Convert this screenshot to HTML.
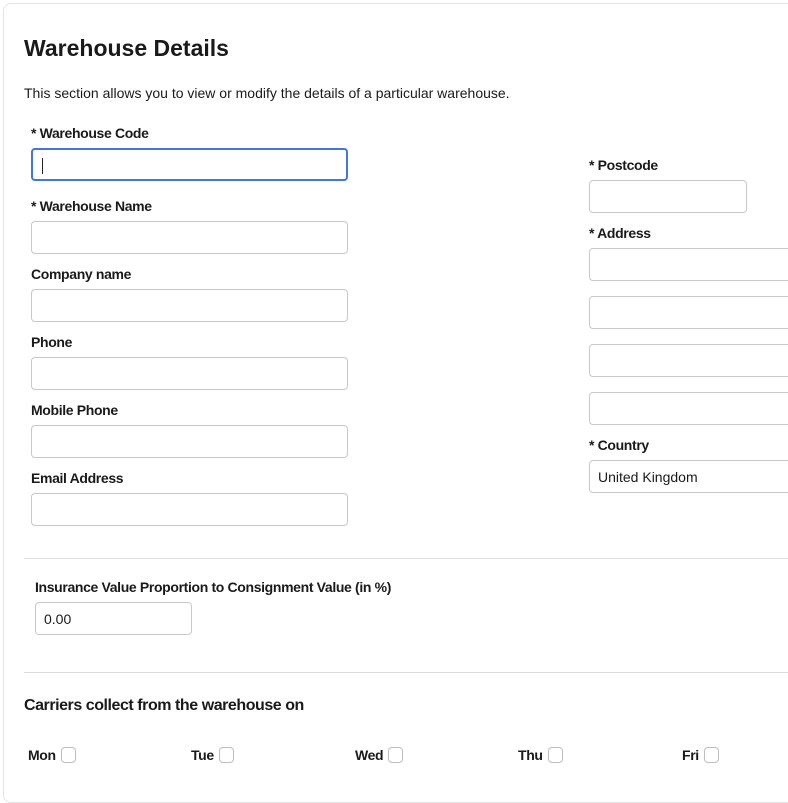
<!DOCTYPE html>
<html><head><style>
*{box-sizing:border-box;margin:0;padding:0}
body{width:788px;height:786px;background:#fff;font-family:"Liberation Sans",sans-serif;color:#1a1a1a;position:relative;overflow:hidden}
.card{position:absolute;left:3px;top:3px;width:800px;height:800px;border:1px solid #e4e4e4;border-radius:8px}
.a{position:absolute;white-space:nowrap}
.t{font-size:23px;font-weight:bold;left:24px;top:35px}
.d{font-size:14px;left:24px;top:85px}
.l{font-size:14px;font-weight:bold;letter-spacing:-0.35px}
.i{position:absolute;height:33px;border:1px solid #c8c8c8;border-radius:4px;background:#fff;font-size:14px;padding:8px 8px}
.hr{position:absolute;left:24px;width:770px;height:1px;background:#dcdcdc}
.cb{display:inline-block;width:15px;height:16px;border:1px solid #bdbdbd;border-radius:4px;vertical-align:middle;margin-left:5px;position:relative;top:-1px}
</style></head><body>
<div class="card"></div>
<div class="a t">Warehouse Details</div>
<div class="a d">This section allows you to view or modify the details of a particular warehouse.</div>

<div class="a l" style="left:31px;top:125px">* Warehouse Code</div>
<div class="i" style="left:31px;top:148px;width:317px;border:2px solid #3f76e0"><span style="display:inline-block;width:1px;height:16px;background:#222;margin-left:1px"></span></div>
<div class="a l" style="left:31px;top:198px">* Warehouse Name</div>
<div class="i" style="left:31px;top:221px;width:317px"></div>
<div class="a l" style="left:31px;top:266px">Company name</div>
<div class="i" style="left:31px;top:289px;width:317px"></div>
<div class="a l" style="left:31px;top:334px">Phone</div>
<div class="i" style="left:31px;top:357px;width:317px"></div>
<div class="a l" style="left:31px;top:402px">Mobile Phone</div>
<div class="i" style="left:31px;top:425px;width:317px"></div>
<div class="a l" style="left:31px;top:470px">Email Address</div>
<div class="i" style="left:31px;top:493px;width:317px"></div>

<div class="a l" style="left:589px;top:157px">* Postcode</div>
<div class="i" style="left:589px;top:180px;width:158px"></div>
<div class="a l" style="left:589px;top:225px">* Address</div>
<div class="i" style="left:589px;top:248px;width:220px"></div>
<div class="i" style="left:589px;top:296px;width:220px"></div>
<div class="i" style="left:589px;top:344px;width:220px"></div>
<div class="i" style="left:589px;top:392px;width:220px"></div>
<div class="a l" style="left:589px;top:437px">* Country</div>
<div class="i" style="left:589px;top:460px;width:220px">United Kingdom</div>

<div class="hr" style="top:558px"></div>
<div class="a l" style="left:35px;top:579px">Insurance Value Proportion to Consignment Value (in %)</div>
<div class="i" style="left:35px;top:602px;width:157px">0.00</div>
<div class="hr" style="top:672px"></div>
<div class="a" style="left:24px;top:697px;font-size:16px;font-weight:bold;letter-spacing:-0.45px">Carriers collect from the warehouse on</div>
<div class="a l" style="left:28px;top:747px">Mon<span class="cb"></span></div>
<div class="a l" style="left:191px;top:747px">Tue<span class="cb"></span></div>
<div class="a l" style="left:355px;top:747px">Wed<span class="cb"></span></div>
<div class="a l" style="left:518px;top:747px">Thu<span class="cb"></span></div>
<div class="a l" style="left:682px;top:747px">Fri<span class="cb"></span></div>
</body></html>
